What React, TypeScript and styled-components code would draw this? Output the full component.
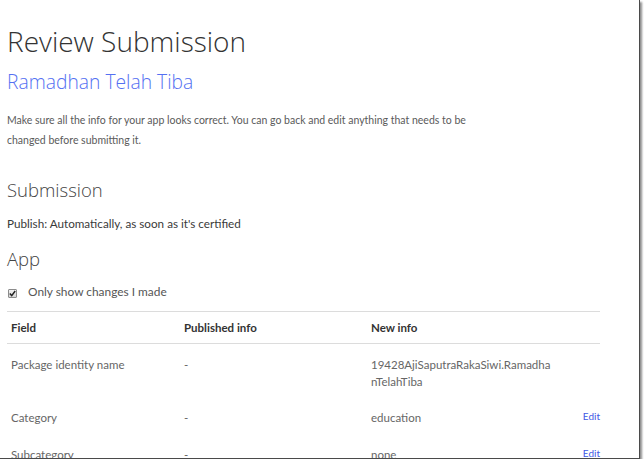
import styled, { createGlobalStyle } from 'styled-components';

const GlobalStyle = createGlobalStyle`
    html, body {
        margin: 0;
        padding: 0;
        background: #ffffff;
    }
    body {
        font-family: Lato, 'Open Sans', 'Liberation Sans', sans-serif;
        color: #333;
    }
`;

interface Row {
    field: string;
    published: string;
    newInfo: string[];
    editable?: boolean;
}

const ROWS: Row[] = [
    { field: 'Package identity name', published: '-', newInfo: ['19428AjiSaputraRakaSiwi.Ramadha', 'nTelahTiba'] },
    { field: 'Category', published: '-', newInfo: ['education'], editable: true },
    { field: 'Subcategory', published: '-', newInfo: ['none'], editable: true }
];

export default function App() {
    return (
        <>
            <GlobalStyle />
            <Frame>
                <Page>
                    <Title>Review Submission</Title>
                    <AppName>Ramadhan Telah Tiba</AppName>
                    <Intro>
                        Make sure all the info for your app looks correct. You can go back and edit anything that needs to be
                        changed before submitting it.
                    </Intro>
                    <SectionTitle $gap={27}>Submission</SectionTitle>
                    <Note>Publish: Automatically, as soon as it's certified</Note>
                    <SectionTitle $gap={15}>App</SectionTitle>
                    <CheckRow>
                        <CheckBox>
                            <svg width="7" height="7" viewBox="0 0 7 7">
                                <path d="M0.8 3.6 L2.7 5.6 L6.2 1" fill="none" stroke="#222" strokeWidth="1.5" />
                            </svg>
                        </CheckBox>
                        <span>Only show changes I made</span>
                    </CheckRow>
                    <Table>
                        <HeadRow>
                            <div>Field</div>
                            <div>Published info</div>
                            <div>New info</div>
                            <div />
                        </HeadRow>
                        {ROWS.map((row) => (
                            <BodyRow key={row.field}>
                                <div>{row.field}</div>
                                <div>{row.published}</div>
                                <div>
                                    {row.newInfo.map((line) => (
                                        <div key={line}>{line}</div>
                                    ))}
                                </div>
                                <EditCell>{row.editable && <EditLink>Edit</EditLink>}</EditCell>
                            </BodyRow>
                        ))}
                    </Table>
                </Page>
            </Frame>
        </>
    );
}

const Frame = styled.div`
    width: 639px;
    height: 458px;
    overflow: hidden;
    background: #fff;
    border-right: 1px solid #4a4a4a;
    border-bottom: 1px solid #4a4a4a;
    box-shadow: 2px 2px 2px rgba(0, 0, 0, 0.45);
`;

const Page = styled.div`
    padding: 22px 0 0 7px;
    width: 593px;
`;

const Title = styled.h1`
    margin: 0;
    font-family: 'Open Sans', sans-serif;
    font-size: 28px;
    font-weight: 300;
    line-height: 38px;
    color: #333;
`;

const AppName = styled.h2`
    margin: 9px 0 0 0;
    font-family: 'Open Sans', sans-serif;
    font-size: 19.3px;
    font-weight: 300;
    line-height: 26px;
    color: #5470f2;
`;

const Intro = styled.p`
    margin: 15px 0 0 0;
    font-size: 10.5px;
    line-height: 20px;
    color: #5a5a5a;
    width: 470px;
`;

const SectionTitle = styled.h3<{ $gap: number }>`
    margin: ${(props) => props.$gap}px 0 0 0;
    font-family: 'Open Sans', sans-serif;
    font-size: 18.5px;
    font-weight: 300;
    line-height: 26px;
    color: #444;
`;

const Note = styled.div`
    margin-top: 12px;
    font-size: 11.7px;
    line-height: 16px;
    color: #3a3a3a;
`;

const CheckRow = styled.div`
    display: flex;
    align-items: flex-start;
    gap: 11px;
    margin-top: 13px;
    padding-left: 1px;
    font-size: 11.9px;
    line-height: 14px;
    color: #555;
`;

const CheckBox = styled.span`
    box-sizing: border-box;
    width: 9px;
    height: 9px;
    margin-top: 4px;
    border: 1px solid #8c8c8c;
    border-radius: 1px;
    background: linear-gradient(#f2f2f2, #d6d6d6);
    display: flex;
    align-items: center;
    justify-content: center;
`;

const Table = styled.div`
    margin-top: 12px;
    border-top: 1px solid #dcdcdc;
`;

const Grid = styled.div`
    display: grid;
    grid-template-columns: 173px 187px 1fr 40px;
    padding-left: 4px;
    font-size: 11.5px;
`;

const HeadRow = styled(Grid)`
    padding-top: 7px;
    padding-bottom: 6px;
    line-height: 18px;
    border-bottom: 1px solid #dcdcdc;
    font-weight: 700;
    color: #333;
`;

const BodyRow = styled(Grid)`
    padding-top: 12px;
    padding-bottom: 7px;
    line-height: 17px;
    color: #666;
`;

const EditCell = styled.div`
    text-align: right;
`;

const EditLink = styled.a`
    position: relative;
    top: -2px;
    font-size: 10px;
    color: #3f57e4;
    cursor: pointer;
`;
